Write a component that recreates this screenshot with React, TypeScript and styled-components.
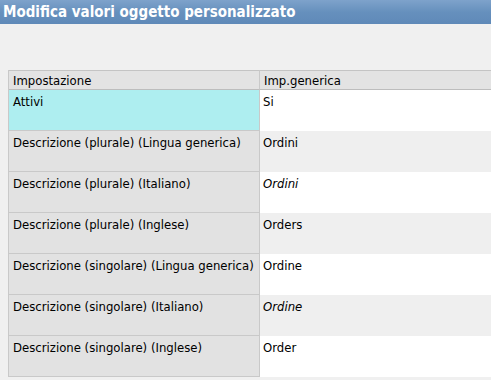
import React from 'react';
import styled, { createGlobalStyle } from 'styled-components';

const GlobalStyle = createGlobalStyle`
  html, body {
    margin: 0;
    padding: 0;
    background: #f0f0f0;
    overflow: hidden;
  }
  body {
    font-family: 'DejaVu Sans', sans-serif;
  }
`;

const Window = styled.div`
  width: 491px;
  height: 380px;
  display: flex;
  flex-direction: column;
  background: #f0f0f0;
  overflow: hidden;
`;

const TitleBar = styled.div`
  height: 24px;
  display: flex;
  align-items: center;
  padding-left: 3px;
  background: linear-gradient(#7ea2cb, #6690bd 50%, #5f89b8);
  color: #ffffff;
  font-family: 'DejaVu Sans Condensed', 'DejaVu Sans', sans-serif;
  font-size: 15px;
  font-weight: bold;
  white-space: nowrap;
`;

const Body = styled.div`
  padding: 46px 0 0 8px;
`;

const Grid = styled.div`
  display: grid;
  grid-template-columns: 251px 1fr;
  width: 483px;
  font-size: 11.7px;
  color: #000;
  border-left: 1px solid #c9c9c9;
  box-sizing: border-box;
`;

const HeadCell = styled.div<{ $last?: boolean }>`
  height: 20px;
  box-sizing: border-box;
  padding: 3px 4px 0;
  background: #e3e3e3;
  border-top: 1px solid #c4c4c4;
  border-bottom: 1px solid #bdbdbd;
  border-right: ${p => (p.$last ? 'none' : '1px solid #c9c9c9')};
  white-space: nowrap;
  overflow: hidden;
`;

const KeyCell = styled.div<{ $active?: boolean }>`
  height: 41px;
  box-sizing: border-box;
  padding: 5px 4px 0;
  background: ${p => (p.$active ? '#aeeef0' : '#e2e2e2')};
  border-bottom: 1px solid #c9c9c9;
  border-right: 1px solid #c9c9c9;
  white-space: nowrap;
  overflow: hidden;
`;

const ValueCell = styled.div<{ $odd?: boolean; $inherited?: boolean }>`
  height: 41px;
  box-sizing: border-box;
  padding: 5px 3px 0;
  background: ${p => (p.$odd ? '#efefef' : '#ffffff')};
  font-style: ${p => (p.$inherited ? 'italic' : 'normal')};
  white-space: nowrap;
  overflow: hidden;
`;

const rows = [
  { key: 'Attivi', value: 'Si' },
  { key: 'Descrizione (plurale) (Lingua generica)', value: 'Ordini' },
  { key: 'Descrizione (plurale) (Italiano)', value: 'Ordini', inherited: true },
  { key: 'Descrizione (plurale) (Inglese)', value: 'Orders' },
  { key: 'Descrizione (singolare) (Lingua generica)', value: 'Ordine' },
  { key: 'Descrizione (singolare) (Italiano)', value: 'Ordine', inherited: true },
  { key: 'Descrizione (singolare) (Inglese)', value: 'Order' },
];

export default function App() {
  return (
    <Window>
      <GlobalStyle />
      <TitleBar>Modifica valori oggetto personalizzato</TitleBar>
      <Body>
        <Grid>
          <HeadCell>Impostazione</HeadCell>
          <HeadCell $last>Imp.generica</HeadCell>
          {rows.map((r, i) => (
            <React.Fragment key={i}>
              <KeyCell $active={i === 0}>{r.key}</KeyCell>
              <ValueCell $odd={i % 2 === 1} $inherited={r.inherited}>
                {r.value}
              </ValueCell>
            </React.Fragment>
          ))}
        </Grid>
      </Body>
    </Window>
  );
}
